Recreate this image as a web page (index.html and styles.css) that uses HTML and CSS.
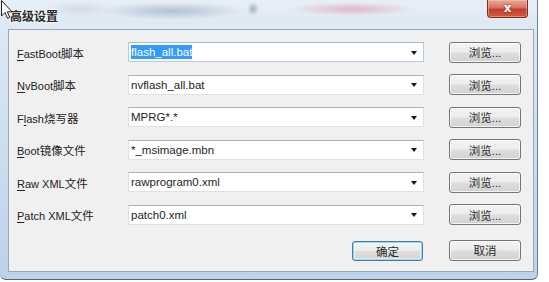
FILE: index.html
```html
<!DOCTYPE html>
<html lang="zh-CN">
<head>
<meta charset="utf-8">
<title>高级设置</title>
<link rel="stylesheet" href="styles.css">
</head>
<body>
<div class="window">
  <div class="titlebar">
    <span class="title">高级设置</span>
    <span class="close">x</span>
  </div>
  <div class="client">
    <div class="form">
      <label class="label"><u>F</u>astBoot<span class="cjk">脚本</span></label>
      <div class="combo focus"><span class="value"><span class="sel">flash_all.bat</span></span><span class="arrow"></span></div>
      <button class="btn browse">浏览...</button>

      <label class="label"><u>N</u>vBoot<span class="cjk">脚本</span></label>
      <div class="combo"><span class="value">nvflash_all.bat</span><span class="arrow"></span></div>
      <button class="btn browse">浏览...</button>

      <label class="label">F<u>l</u>ash<span class="cjk">烧写器</span></label>
      <div class="combo"><span class="value">MPRG*.*</span><span class="arrow"></span></div>
      <button class="btn browse">浏览...</button>

      <label class="label"><u>B</u>oot<span class="cjk">镜像文件</span></label>
      <div class="combo"><span class="value">*_msimage.mbn</span><span class="arrow"></span></div>
      <button class="btn browse">浏览...</button>

      <label class="label"><u>R</u>aw XML<span class="cjk">文件</span></label>
      <div class="combo"><span class="value">rawprogram0.xml</span><span class="arrow"></span></div>
      <button class="btn browse">浏览...</button>

      <label class="label"><u>P</u>atch XML<span class="cjk">文件</span></label>
      <div class="combo"><span class="value">patch0.xml</span><span class="arrow"></span></div>
      <button class="btn browse">浏览...</button>
    </div>
    <div class="actions">
      <button class="btn ok">确定</button>
      <button class="btn cancel">取消</button>
    </div>
  </div>
  <svg class="cursor" width="14" height="20" viewBox="0 0 14 20">
    <path d="M1.5 0.5 L1.5 16 L5 12.5 L7.6 18.4 L9.8 17.4 L7.3 11.8 L12 11.8 Z" fill="#fff" stroke="#222" stroke-width="1"/>
  </svg>
</div>
</body>
</html>
```
FILE: styles.css
```css
* { box-sizing: border-box; }
html, body { margin: 0; padding: 0; background: #ffffff; }
body {
  width: 549px;
  height: 282px;
  overflow: hidden;
  font-family: "Liberation Sans", "Noto Sans CJK SC", sans-serif;
  font-size: 12px;
  color: #1e1e1e;
}
.window {
  position: relative;
  width: 538px;
  height: 280px;
  border-right: 1px solid #6d7f92;
  border-bottom: 1px solid #56677a;
  border-bottom-left-radius: 6px;
  border-bottom-right-radius: 6px;
  background: linear-gradient(to bottom, #e7eef6 0, #dde8f3 30px, #cadcee 60%, #bcd2ea 100%);
  display: flex;
  flex-direction: column;
}
.titlebar {
  height: 29px;
  display: flex;
  align-items: center;
  justify-content: space-between;
  padding-left: 10px;
  background:
    radial-gradient(ellipse 72px 9px at 172px 11px, rgba(140,158,182,0.55), rgba(140,158,182,0) 100%),
    radial-gradient(ellipse 6px 7px at 253px 9px, rgba(100,118,140,0.5), rgba(100,118,140,0) 100%),
    radial-gradient(ellipse 62px 7px at 352px 9px, rgba(226,130,155,0.5), rgba(226,130,155,0) 100%),
    radial-gradient(ellipse 32px 8px at 80px 9px, rgba(175,186,200,0.35), rgba(175,186,200,0) 100%);
}
.title {
  font-size: 12px;
  font-weight: bold;
  color: #2a2a2a;
  text-shadow: 0 0 4px #ffffff, 0 0 2px #ffffff;
  padding-top: 1px;
}
.close {
  align-self: flex-start;
  width: 41px;
  height: 18px;
  margin-right: 9px;
  border: 1px solid #7b2d22;
  border-top: none;
  border-radius: 0 0 4px 4px;
  background: linear-gradient(to bottom, #e9a99b 0%, #d9725f 45%, #c3402c 55%, #d4583d 100%);
  box-shadow: inset 0 0 0 1px rgba(255,200,190,0.45);
  color: #ffffff;
  font-family: "DejaVu Sans", sans-serif;
  font-weight: bold;
  font-size: 12px;
  line-height: 16px;
  text-align: center;
  text-shadow: 0 0 2px #6a1a10;
}
.client {
  margin: 0 3px 0 8px;
  height: 243px;
  border: 1px solid #97a8ba;
  background: #f0f0f0;
  padding: 12px 0 0 8px;
}
.form {
  display: grid;
  grid-template-columns: 111px 296px 97px;
  grid-auto-rows: 20px;
  row-gap: 12.6px;
  align-items: center;
}
.label {
  font-size: 11px;
  color: #222;
  white-space: nowrap;
  padding-top: 1px;
}
.label .cjk { font-size: 11.5px; }
.label u { text-decoration-thickness: 1px; text-underline-offset: 2px; }
.combo {
  height: 20px;
  display: flex;
  align-items: center;
  justify-content: space-between;
  background: #ffffff;
  border: 1px solid #dde1e7;
  border-top-color: #abb0b8;
  padding: 0 6px 0 2px;
}
.combo.focus {
  border-color: #b4cbe5;
  border-top-color: #9fbbdc;
}
.value {
  font-size: 11.5px;
  color: #1e1e1e;
  white-space: nowrap;
}
.sel {
  background: #3399ff;
  color: #ffffff;
  padding: 1px 0;
}
.arrow {
  width: 0;
  height: 0;
  border-left: 3px solid transparent;
  border-right: 3px solid transparent;
  border-top: 4px solid #1a1a1a;
  margin-top: 1px;
}
.btn {
  font-family: "Liberation Sans", "Noto Sans CJK SC", sans-serif;
  font-size: 11.5px;
  color: #2a2a2a;
  border: 1px solid #767676;
  border-radius: 3px;
  background: linear-gradient(to bottom, #f3f3f3 0%, #ececec 48%, #dedede 52%, #d2d2d2 100%);
  box-shadow: inset 0 0 0 1px rgba(255,255,255,0.75);
  padding: 0;
  margin: 0;
}
.browse {
  width: 72px;
  height: 21px;
  justify-self: end;
}
.actions {
  display: flex;
  justify-content: flex-end;
  gap: 26px;
  width: 504px;
  margin-top: 15px;
}
.ok {
  width: 71px;
  height: 20px;
  margin-top: 1px;
  border-color: #3c7fb1;
  box-shadow: inset 0 0 0 1px #9ed4f2, inset 0 0 0 2px rgba(255,255,255,0.5);
}
.cancel {
  width: 72px;
  height: 21px;
}
.cursor {
  position: absolute;
  left: 0;
  top: 0;
}
```
